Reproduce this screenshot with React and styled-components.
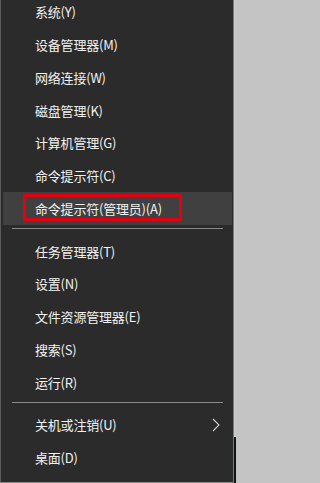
import React from "react";
import styled, { createGlobalStyle } from "styled-components";

const GlobalStyle = createGlobalStyle`
  html, body {
    margin: 0;
    padding: 0;
    background: #c4c4c4;
    overflow: hidden;
  }
`;

const Page = styled.div`
  display: flex;
  width: 236px;
  height: 483px;
  overflow: hidden;
`;

const Menu = styled.div`
  width: 232px;
  height: 482px;
  background: #2b2b2b;
  border-left: 1px solid #5c5c5c;
  border-right: 1px solid #7a7a7a;
  border-bottom: 1px solid #8c8c8c;
  overflow: hidden;
  font-family: "Noto Sans CJK SC", "Microsoft YaHei", sans-serif;
  font-size: 13px;
  color: #f2f2f2;
`;

const List = styled.ul`
  list-style: none;
  margin: -4.4px 0 0;
  padding: 0;
`;

const Row = styled.li`
  position: relative;
  display: flex;
  align-items: center;
  justify-content: space-between;
  height: 32.75px;
  margin: 0 1px 0 2px;
  padding: 0 12px 0 32px;
  background: ${p => (p.$active ? "#404040" : "transparent")};
  white-space: nowrap;
`;

const Label = styled.span`
  line-height: 1;
  letter-spacing: -0.2px;
`;

const Separator = styled.li`
  height: 1px;
  margin: 3.6px 10px 5.4px 11px;
  background: #8a8a8a;
`;

const Annotation = styled.div`
  position: absolute;
  left: 19.5px;
  top: 1.8px;
  width: 159px;
  height: 27px;
  box-sizing: border-box;
  border: 3px solid #e5000f;
  pointer-events: none;
`;

const Chevron = styled.svg`
  width: 8px;
  height: 14px;
  margin-top: 1px;
`;

const Edge = styled.div`
  flex: 1;
  display: flex;
  flex-direction: column;
`;

const EdgeTop = styled.div`
  height: 437px;
  background: #c9c9c9;
`;

const EdgeBottom = styled.div`
  flex: 1;
  background: #0c1512;
`;

const groups = [
  [
    { label: "系统(Y)" },
    { label: "设备管理器(M)" },
    { label: "网络连接(W)" },
    { label: "磁盘管理(K)" },
    { label: "计算机管理(G)" },
    { label: "命令提示符(C)" },
    { label: "命令提示符(管理员)(A)", active: true, marked: true },
  ],
  [
    { label: "任务管理器(T)" },
    { label: "设置(N)" },
    { label: "文件资源管理器(E)" },
    { label: "搜索(S)" },
    { label: "运行(R)" },
  ],
  [
    { label: "关机或注销(U)", submenu: true },
    { label: "桌面(D)" },
  ],
];

export default function App() {
  return (
    <>
      <GlobalStyle />
      <Page>
        <Menu>
          <List>
            {groups.map((items, gi) => (
              <React.Fragment key={gi}>
                {gi > 0 && <Separator />}
                {items.map(item => (
                  <Row key={item.label} $active={item.active}>
                    <Label>{item.label}</Label>
                    {item.submenu && (
                      <Chevron viewBox="0 0 8 14">
                        <path d="M1 1 L7 7 L1 13" fill="none" stroke="#cfcfcf" strokeWidth="1.1" />
                      </Chevron>
                    )}
                    {item.marked && <Annotation />}
                  </Row>
                ))}
              </React.Fragment>
            ))}
          </List>
        </Menu>
        <Edge>
          <EdgeTop />
          <EdgeBottom />
        </Edge>
      </Page>
    </>
  );
}
